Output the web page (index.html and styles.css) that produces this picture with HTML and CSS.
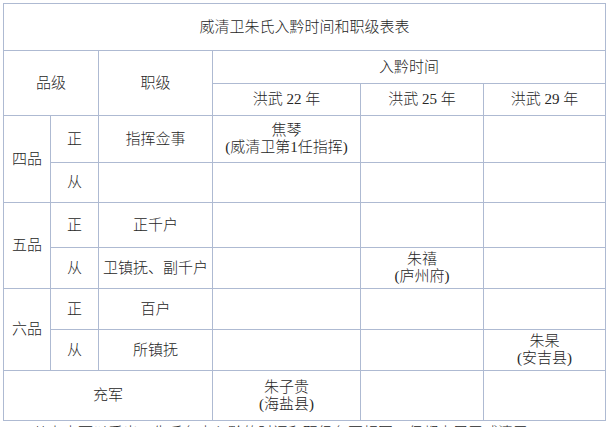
FILE: index.html
```html
<!DOCTYPE html>
<html lang="zh-CN">
<head>
<meta charset="utf-8">
<title>威清卫朱氏入黔时间和职级表</title>
<link rel="stylesheet" href="styles.css">
</head>
<body>
<div class="page">
  <table class="rank-table">
    <colgroup>
      <col class="c1"><col class="c2"><col class="c3"><col class="c4"><col class="c5"><col class="c6">
    </colgroup>
    <tr class="h47"><td colspan="6">威清卫朱氏入黔时间和职级表表</td></tr>
    <tr class="h33"><td colspan="2" rowspan="2">品级</td><td rowspan="2">职级</td><td colspan="3">入黔时间</td></tr>
    <tr class="h32"><td>洪武 22 年</td><td>洪武 25 年</td><td>洪武 29 年</td></tr>
    <tr class="h47"><td rowspan="2">四品</td><td>正</td><td>指挥佥事</td><td>焦琴<br>(威清卫第1任指挥)</td><td></td><td></td></tr>
    <tr class="h40"><td>从</td><td></td><td></td><td></td><td></td></tr>
    <tr class="h45"><td rowspan="2">五品</td><td>正</td><td>正千户</td><td></td><td></td><td></td></tr>
    <tr class="h41"><td>从</td><td>卫镇抚、副千户</td><td></td><td>朱禧<br>(庐州府)</td><td></td></tr>
    <tr class="h41"><td rowspan="2">六品</td><td>正</td><td>百户</td><td></td><td></td><td></td></tr>
    <tr class="h41"><td>从</td><td>所镇抚</td><td></td><td></td><td>朱杲<br>(安吉县)</td></tr>
    <tr class="h50"><td colspan="3">充军</td><td>朱子贵<br>(海盐县)</td><td></td><td></td></tr>
  </table>
  <p class="note">从上表可以看出，朱氏各支入黔的时间和职级各不相同，但都隶属于威清卫。</p>
</div>
</body>
</html>
```
FILE: styles.css
```css
html, body {
  margin: 0;
  padding: 0;
  background: #ffffff;
}
.page {
  padding: 3px 0 0 3px;
  font-family: "Liberation Serif", "Noto Sans CJK SC", serif;
  color: #262626;
  font-size: 15px;
  font-weight: 300;
}
.rank-table {
  border-collapse: collapse;
  table-layout: fixed;
  width: 603px;
}
.rank-table td {
  border: 1px solid #aebad2;
  padding: 0;
  text-align: center;
  vertical-align: middle;
  line-height: 17px;
  font-size: 15px;
}
.c1 { width: 47px; }
.c2 { width: 48px; }
.c3 { width: 114px; }
.c4 { width: 148px; }
.c5 { width: 123px; }
.c6 { width: 122px; }
.h47 { height: 47px; }
.h33 { height: 33px; }
.h32 { height: 32px; }
.h40 { height: 40px; }
.h45 { height: 45px; }
.h41 { height: 41px; }
.h50 { height: 50px; }
.note {
  margin: 2px 0 0 0;
  padding-left: 30px;
  font-size: 15px;
  line-height: 20px;
  white-space: nowrap;
}
```
